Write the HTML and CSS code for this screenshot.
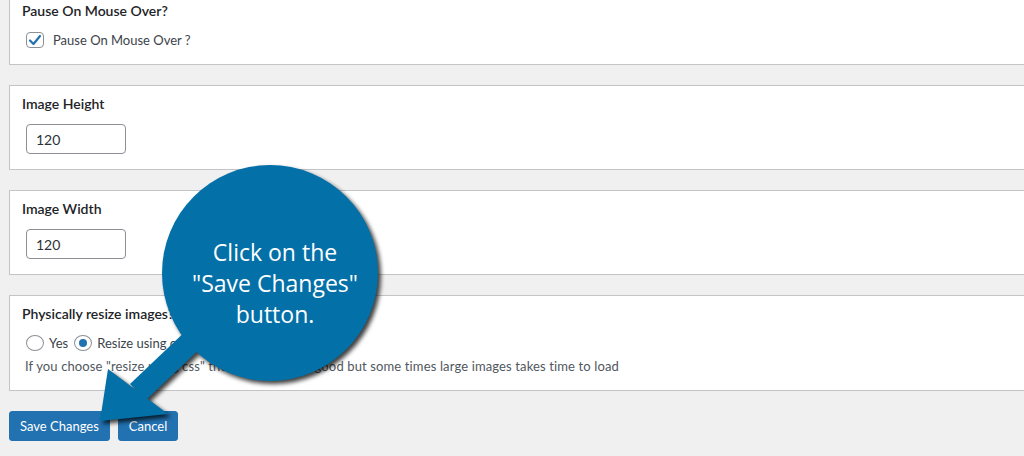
FILE: index.html
```html
<!DOCTYPE html>
<html lang="en">

<head>
    <meta charset="UTF-8">
    <title>Slider settings</title>
    <link rel="stylesheet" href="styles.css">
</head>

<body>
    <div class="wrap">
        <div class="panel">
            <h3>Pause On Mouse Over?</h3>
            <div class="field row">
                <label class="check">
                    <span class="box">
                        <svg width="14" height="12" viewBox="0 0 14 12">
                            <path d="M2 6.5 L5.5 10 L12 2" fill="none" stroke="#2271b1" stroke-width="2.2" stroke-linecap="round" stroke-linejoin="round"/>
                        </svg>
                    </span>
                    Pause On Mouse Over ?
                </label>
            </div>
        </div>

        <div class="panel">
            <h3>Image Height</h3>
            <div class="field">
                <input class="num" type="text" value="120">
            </div>
        </div>

        <div class="panel">
            <h3>Image Width</h3>
            <div class="field">
                <input class="num" type="text" value="120">
            </div>
        </div>

        <div class="panel">
            <h3>Physically resize images?</h3>
            <div class="field row radios">
                <label class="radio"><span class="dot"></span>Yes</label>
                <label class="radio"><span class="dot on"></span>Resize using css</label>
            </div>
            <p class="desc">If you choose "resize using css" the quality will be good but some times large images takes time to load</p>
        </div>

        <div class="actions">
            <button class="btn">Save Changes</button>
            <button class="btn">Cancel</button>
        </div>
    </div>

    <!-- callout over the page -->
    <svg class="callout" width="1024" height="456" viewBox="0 0 1024 456">
        <g fill="#0370a8">
            <polygon points="130,384 146,400 248,303 232,287"/>
            <polygon points="100,421 108,369 168,414"/>
            <circle cx="270" cy="273" r="108"/>
        </g>
    </svg>
    <div class="callout-text">Click on the<br>"Save Changes"<br>button.</div>
</body>

</html>
```

FILE: styles.css
```css
* {
    box-sizing: border-box;
}

body {
    margin: 0;
    height: 456px;
    overflow: hidden;
    position: relative;
    background: #f0f0f1;
    color: #3c434a;
    font-family: Lato, 'Noto Sans', sans-serif;
    font-size: 13px;
}

.wrap {
    padding-left: 9px;
    margin-top: -8px;
}

.panel {
    background: #fff;
    border: 1px solid #c3c4c7;
    border-right: none;
    padding: 8px 12px 15px;
    margin-bottom: 20px;
}

.panel:first-child {
    padding-bottom: 14px;
}

.panel:nth-child(4) {
    padding-bottom: 14px;
}

h3 {
    margin: 0;
    font-size: 14px;
    font-weight: 600;
    line-height: 20px;
    color: #1d2327;
}

.field {
    padding-left: 4px;
    margin-top: 10px;
}

.row {
    margin-top: 9px;
    display: flex;
    align-items: center;
    height: 20px;
}

.check,
.radio {
    display: flex;
    align-items: center;
}

.box {
    width: 18px;
    height: 16px;
    border: 1px solid #8c8f94;
    border-radius: 4px;
    margin-right: 9px;
    display: flex;
    align-items: center;
    justify-content: center;
}

.radios {
    gap: 6px;
}

.dot {
    width: 18px;
    height: 16px;
    border: 1px solid #8c8f94;
    border-radius: 50%;
    margin-right: 5px;
    display: flex;
    align-items: center;
    justify-content: center;
}

.dot.on::after {
    content: "";
    width: 8px;
    height: 8px;
    border-radius: 50%;
    background: #2271b1;
}

.num {
    width: 100px;
    height: 30px;
    border: 1px solid #8c8f94;
    border-radius: 4px;
    padding: 0 9px;
    font-family: inherit;
    font-size: 14px;
    color: #2c3338;
}

.desc {
    margin: 3px 0 0;
    padding-left: 3px;
    line-height: 20px;
    letter-spacing: 0.13px;
    color: #50575e;
}

.actions {
    display: flex;
    gap: 8px;
}

.btn {
    height: 30px;
    padding: 0 10px;
    background: #2271b1;
    border: 1px solid #2271b1;
    border-radius: 3px;
    color: #fff;
    font-family: inherit;
    font-size: 13px;
}

.callout {
    position: absolute;
    left: 0;
    top: 0;
    filter: drop-shadow(3px 3px 2px rgba(0, 0, 0, 0.75));
}

.callout-text {
    position: absolute;
    left: 175px;
    top: 237px;
    width: 200px;
    text-align: center;
    color: #fff;
    font-family: 'Open Sans', sans-serif;
    font-size: 23px;
    line-height: 31px;
}
```
